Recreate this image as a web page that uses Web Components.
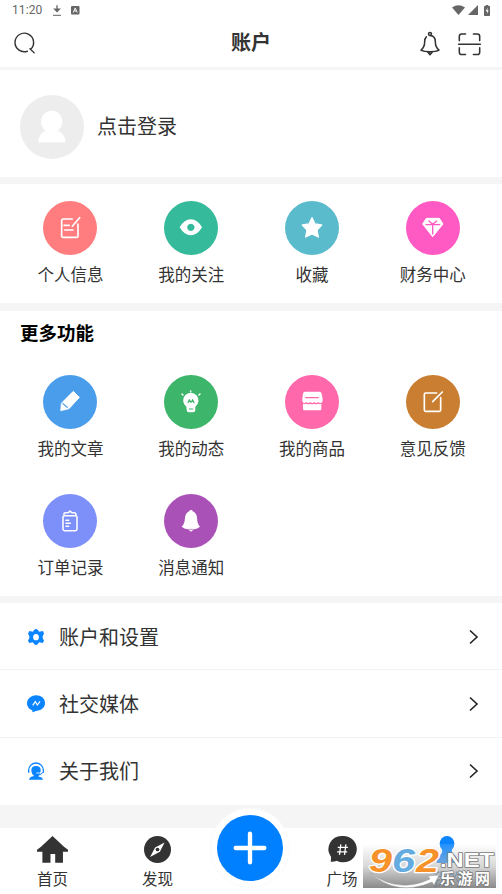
<!DOCTYPE html>
<html lang="zh">
<head>
<meta charset="utf-8">
<title>账户</title>
<style>
html,body{margin:0;height:100%;background:#fff}
body{font-family:"Noto Sans CJK SC",sans-serif;color:#333;overflow:hidden}
</style>
</head>
<body>
<account-page></account-page>
<script>
const ICONS = {
  download:['0 0 24 32','<path d="M12 1v16M5 12l7 7 7-7z" stroke="#666" stroke-width="4" fill="#666"/><path d="M0 30h24" stroke="#666" stroke-width="3"/>'],
  abox:['0 0 26 26','<rect width="26" height="26" rx="3" fill="#666"/><path d="M7 20l6-14 6 14M9.500 15h7" stroke="#fff" stroke-width="3" fill="none"/>'],
  wifi:['0 0 38 32','<path d="M0 8Q19-7 38 8L19 32z" fill="#666"/>'],
  signal:['0 0 30 30','<path d="M30 0v30H0z" fill="#666"/>'],
  battery:['0 0 18 34','<path d="M5 0h8v3h3q2 0 2 2v27q0 2-2 2H2q-2 0-2-2V5q0-2 2-2h3z" fill="#666"/><path d="M11 8l-6 11h4v8l5-11h-4z" fill="#fff"/>'],
  search:['0 0 66 66','<path d="M41 56A28.500 28.500 0 1 1 51 50M49 48l13 13" fill="none" stroke="#333" stroke-width="4.300" stroke-linecap="round"/>'],
  bell:['0 0 60 74','<g fill="none" stroke="#333" stroke-width="4.600" stroke-linejoin="round" stroke-linecap="round"><circle cx="30" cy="6" r="4.500"/><path d="M19 15Q14 20 14 30Q14 47 3 56Q12 61 30 61T57 56Q46 47 46 30Q46 12 30 11M23 62l7 8 7-8z"/></g>'],
  scan:['0 0 70 68','<path d="M4 23V10q0-7 7-7h12M47 3h12q7 0 7 7v13M4 45v13q0 7 7 7h12M47 65h12q7 0 7-7V45M2 34h66" fill="none" stroke="#333" stroke-width="4.700" stroke-linecap="round"/>'],
  person:['0 0 192 192','<ellipse cx="95" cy="80" rx="32" ry="33" fill="#fff"/><path d="M54 142Q57 111 80 107L94 112 110 107Q134 111 137 142z" fill="#fff"/>'],
  info:['0 0 162 162','<path d="M88 54H61q-5 0-5 5v45q0 5 5 5h39q5 0 5-5V69M110 50L88 76M63 73h16M65 87h25" fill="none" stroke="#fff" stroke-width="5" stroke-linecap="round"/>'],
  eye:['0 0 162 162','<path fill="#fff" fill-rule="evenodd" d="M47 79Q61 55 80.500 55T114 79Q100 103 80.500 103T47 79zM80.500 68a11 11 0 1 0 .1 0z"/>'],
  star:['0 0 162 162','<path d="M81 50l9 19 20 3-14 15 4 21-19-9-19 9 4-21-14-15 20-3z" fill="#fff" stroke="#fff" stroke-width="4" stroke-linejoin="round"/>'],
  gem:['0 0 162 162','<path d="M61 52h39l11 17-31 38-30-38z" fill="#fff" stroke="#fff" stroke-width="3" stroke-linejoin="round"/><path d="M69 60l11 10 12-10M60 71h41M80 70v29" fill="none" stroke="#ff5ac4" stroke-width="4" stroke-linecap="round"/>'],
  pencil:['0 0 162 162','<path d="M91 49l18 18-31 34-20-19z" fill="#fff" stroke="#fff" stroke-width="3" stroke-linejoin="round"/><path d="M55 84l21 18-23 5z" fill="#fff" stroke="#fff" stroke-width="2"/><path d="M60 86l14 12" stroke="#4a9deb" stroke-width="3.500"/>'],
  bulb:['0 0 162 162','<path d="M67 95A23 23 0 1 1 94 95V105q0 7-7 7H75q-7 0-7-7z" fill="#fff"/><path d="M72 83l4-8 5 7 5-7 4 8M76 102h10" fill="none" stroke="#3db56a" stroke-width="3.600" stroke-linecap="round"/><path d="M80 48v2M54 57l3 3M108 57l-3 3" stroke="#fff" stroke-width="4.500" stroke-linecap="round"/>'],
  shop:['0 0 162 162','<path d="M60 50h43q6 0 7 6l3 17q1 9-5 11-5 1-8-3-6 6-12 0-6 6-12 0-6 6-12 0-4 4-9 2-5-3-3-11l2-16q1-6 6-6z" fill="#fff"/><path d="M54 86q6 2 11 0 6 3 11 0 6 3 12 0 6 3 11 0 5 2 10 0v16q0 4-4 4H58q-4 0-4-4z" fill="#fff"/><path d="M62 68h38" stroke="#ff68ab" stroke-width="3.500" stroke-linecap="round"/>'],
  edit:['0 0 162 162','<path d="M92 54H59q-4 0-4 4v47q0 4 4 4h41q4 0 4-4V68M109 51L80 80" fill="none" stroke="#fff" stroke-width="5" stroke-linecap="round"/>'],
  order:['0 0 162 162','<path d="M60 69q0-4 4-4h33q5 0 5 4v36q0 5-5 5H65q-5 0-5-5zM63 62q-1-6 6-6h7l5-5 5 5h7q6 0 6 6M69 79h8M69 88h13M69 97h8" fill="none" stroke="#fff" stroke-width="4.600" stroke-linecap="round" stroke-linejoin="round"/>'],
  notice:['0 0 162 162','<path d="M76 52q0-4 5-4t5 4q12 5 13 19 1 20 9 27-7 6-18 8l-9 7-9-7q-13-2-19-8 9-8 10-27 1-14 13-19z" fill="#fff"/><path d="M73 106h15" stroke="#aa51b8" stroke-width="2"/>'],
  gear:['0 0 54 54','<path d="M21 6l6-4 6 4 3 5 12-2 3 8-4 8v5l4 8-4 7-11-2-4 6-5 3-6-4-3-5-11 2-4-7 4-8v-5l-4-8 4-8 11 2z" fill="#0a84ff"/><ellipse cx="27" cy="27.500" rx="8.500" ry="9.500" fill="#fff"/>'],
  chat:['0 0 54 54','<path d="M27 1C42 1 54 10 54 24S42 47 30 47L16 52V46C6 43 0 34 0 24S12 1 27 1z" fill="#0a84ff"/><path d="M17 31l8-11 6 10 8-11" fill="none" stroke="#fff" stroke-width="3.500"/>'],
  support:['0 0 54 54','<path d="M5 32V25A22 22 0 0 1 49 25V32" fill="none" stroke="#0a84ff" stroke-width="4"/><path d="M13 27Q12 12 27 12T41 26Q42 36 35 41V44Q46 44 48 53H6Q8 44 20 43V40Q14 36 13 27z" fill="#0a84ff"/><path d="M28 33q12 3 18-5" stroke="#fff" stroke-width="2.500" fill="none"/><path d="M48 31l-8 7H27" stroke="#0a84ff" stroke-width="3" fill="none"/>'],
  arrow:['0 0 12 18','<path d="M2 2.500l7 6.500-7 6.500" fill="none" stroke="#222" stroke-width="1.600"/>'],
  home:['0 0 92 80','<path d="M46 0l16 15 18 17 12 9v6H77V79H54V53H40V79H16V47H0V41L12 32z" fill="#333"/>'],
  compass:['0 0 80 80','<circle cx="40" cy="40" r="40" fill="#333"/><path d="M61 19L47 47 18 62 33 34z" fill="#fff"/><circle cx="40" cy="40" r="5.500" fill="#333"/>'],
  square:['0 0 80 80','<path d="M40 0a40 39 0 1 1-17 73Q15 77 5 76 6 70 6 62A39 39 0 0 1 40 0z" fill="#333"/><path d="M35 25l-4 31M50 25l-4 31M26 34h30M24 47h30" stroke="#fff" stroke-width="3.800"/>'],
  plus:['0 0 96 96','<path d="M48 5v86M5 48h86" stroke="#fff" stroke-width="13" stroke-linecap="round"/>'],
  me:['0 0 66 76','<circle cx="33" cy="22" r="22" fill="#0a84ff"/><path d="M18 38h30q-3 12 9 16 7 5 7 22H2Q2 60 10 54 21 50 18 38z" fill="#0a84ff"/>']
};

class UiIcon extends HTMLElement{
  connectedCallback(){
    const [box,body]=ICONS[this.getAttribute('name')];
    const w=this.getAttribute('w'),h=this.getAttribute('h')||w;
    this.attachShadow({mode:'open'}).innerHTML=`<style>:host{display:block;flex:none;width:${w}px;height:${h}px}svg{display:block;width:100%;height:100%;overflow:visible}</style><svg viewBox="${box}" preserveAspectRatio="none">${body}</svg>`;
  }
}
customElements.define('ui-icon',UiIcon);

const define=(tag,render)=>customElements.define(tag,class extends HTMLElement{
  connectedCallback(){ this.attachShadow({mode:'open'}).innerHTML=render(this); }
});

define('status-bar',()=>`<style>
:host{display:flex;height:20px;box-sizing:border-box;padding:0 12px;align-items:center;font:12px/20px Roboto,sans-serif;color:#666}
.time{letter-spacing:.1px;width:30px;white-space:nowrap}
.dl{margin-left:11px}.ab{margin-left:10px}.sp{flex:1}.sg{margin:0 6px 0 3px}
</style><span class="time">11:20</span><ui-icon class="dl" name="download" w="8" h="11"></ui-icon><ui-icon class="ab" name="abox" w="8.500"></ui-icon><span class="sp"></span><ui-icon name="wifi" w="13" h="10"></ui-icon><ui-icon class="sg" name="signal" w="10"></ui-icon><ui-icon name="battery" w="6" h="11"></ui-icon>`);

define('nav-header',()=>`<style>
:host{display:grid;grid-template-columns:1fr auto 1fr;align-items:center;height:47px;box-sizing:border-box;padding:0 21px 0 13.500px}
h1{margin:0;padding:0 0 4px;font-size:20px;line-height:24px;font-weight:700}
.r{display:flex;justify-content:flex-end;gap:18.500px;align-items:center;padding-top:1px}
ui-icon[name=search]{margin-top:1px}
:host{grid-template-columns:217.500px auto 1fr}
</style><ui-icon name="search" w="21.500"></ui-icon><h1><slot></slot></h1><div class="r"><ui-icon name="bell" w="20" h="24"></ui-icon><ui-icon name="scan" w="23" h="22.500"></ui-icon></div>`);

define('login-card',()=>`<style>
:host{display:flex;align-items:center;gap:13px;padding:8px 20px 1px;height:107px;box-sizing:border-box}
.a{width:64px;height:64px;border-radius:50%;background:#ededed}
span{font-size:20px;line-height:28px;padding-bottom:3px}
</style><div class="a"><ui-icon name="person" w="64"></ui-icon></div><span><slot></slot></span>`);

define('action-tile',el=>`<style>
:host{display:flex;flex-direction:column;align-items:center}
.c{width:54px;height:54px;border-radius:50%;background:${el.getAttribute('color')}}
span{font-size:16.500px;line-height:24px;margin-top:7px;white-space:nowrap}
</style><div class="c"><ui-icon name="${el.getAttribute('icon')}" w="54"></ui-icon></div><span><slot></slot></span>`);

define('tile-grid',()=>`<style>
:host{display:grid;grid-template-columns:repeat(4,1fr);row-gap:34px;padding:0 9px 0 10px}
</style><slot></slot>`);

define('page-section',el=>`<style>
:host{display:block;box-sizing:border-box;background:#fff}
h2{box-sizing:border-box;margin:0;padding:9px 20px 0;font-size:18.500px;line-height:24px;height:64px;font-weight:700;color:#000}
</style>${el.getAttribute('heading')?`<h2>${el.getAttribute('heading')}</h2>`:''}<slot></slot>`);

define('menu-row',el=>`<style>
:host{display:flex;align-items:center;height:67.300px;box-sizing:border-box;padding:1px 22px 0 27px;border-bottom:1px solid #f3f3f3}
:host(:last-child){border-color:transparent;padding-top:0}
span{flex:1;margin-left:14px;font-size:20px;line-height:28px}
</style><ui-icon name="${el.getAttribute('icon')}" w="18"></ui-icon><span><slot></slot></span><ui-icon name="arrow" w="12" h="18"></ui-icon>`);

define('tab-item',el=>`<style>
:host{display:flex;flex-direction:column;align-items:center;padding-top:8px}
span{font-size:15.500px;line-height:22px;margin-top:4px;color:var(--tab,#333)}
.i{height:27px}
</style><div class="i"><ui-icon name="${el.getAttribute('icon')}" w="${el.getAttribute('w')}" h="27"></ui-icon></div><span><slot></slot></span>`);

define('add-button',()=>`<style>
:host{position:absolute;left:210px;top:-20px;width:80px;height:80px;border-radius:50%;background:#fff;display:grid;place-items:center;box-shadow:inset 0 0 0 1px #fafafa}
div{width:66px;height:66px;border-radius:50%;background:#0080ff;display:grid;place-items:center}
</style><div><ui-icon name="plus" w="32"></ui-icon></div>`);

define('site-stamp',()=>`<style>
:host{position:absolute;left:363px;bottom:0;width:133px;height:44px;background:linear-gradient(rgba(255,255,255,.1),rgba(190,190,190,.6) 50%,rgba(125,125,125,.9))}
svg{display:block;overflow:visible}text{paint-order:stroke;stroke-linejoin:round}
</style><svg width="133" height="44" viewBox="0 0 133 44">
<path d="M7 29Q36 50 67 35l-2-3 11-1-5 10-2-3Q34 53 7 29z" fill="#fff" stroke="#999" stroke-width=".5"/>
<g font-family="Liberation Sans,sans-serif" font-weight="700" font-style="italic" font-size="34" stroke="#fff" stroke-width="2.500">
<text x="6" y="28" textLength="23" lengthAdjust="spacingAndGlyphs" fill="#f7922b">9</text><text x="29" y="28" textLength="23" lengthAdjust="spacingAndGlyphs" fill="#64ace0">6</text><text x="53" y="28" textLength="23" lengthAdjust="spacingAndGlyphs" fill="#f7922b">2</text></g>
<text x="77" y="22.500" font-family="Liberation Sans,sans-serif" font-weight="700" font-size="19.500" textLength="54" lengthAdjust="spacingAndGlyphs" fill="#fff" stroke="#777" stroke-width="1.500">.NET</text>
<text x="77" y="39.500" font-family="Noto Sans CJK SC,sans-serif" font-weight="700" font-size="15" textLength="50" fill="#fff" stroke="#777" stroke-width="1.500">乐游网</text></svg>`);

define('tab-bar',()=>`<style>
:host{position:relative;display:grid;grid-template-columns:105px 105px 79.500px 105px 105px;height:60.500px;background:#fff}
.me{--tab:#1674c8}
</style><tab-item icon="home" w="31">首页</tab-item><tab-item icon="compass" w="27">发现</tab-item><i></i><tab-item icon="square" w="27">广场</tab-item><tab-item class="me" icon="me" w="22">我的</tab-item><add-button></add-button><site-stamp></site-stamp>`);

define('account-page',()=>`<style>
:host{display:flex;flex-direction:column;width:502px;height:888px;background:#f5f5f5}
.top{background:#fff}
.login{margin-top:3px;height:107px}
.quick{margin-top:7px;height:119px;padding-top:17px}
.more{margin-top:8px;height:285px}
.menu{margin-top:7px;height:202px}
tab-bar{margin-top:auto}
</style>
<div class="top"><status-bar></status-bar><nav-header>账户</nav-header></div>
<page-section class="login"><login-card>点击登录</login-card></page-section>
<page-section class="quick"><tile-grid>
<action-tile icon="info" color="#ff7d7e">个人信息</action-tile><action-tile icon="eye" color="#35ba9b">我的关注</action-tile><action-tile icon="star" color="#59bbcc">收藏</action-tile><action-tile icon="gem" color="#ff5ac4">财务中心</action-tile></tile-grid></page-section>
<page-section class="more" heading="更多功能"><tile-grid>
<action-tile icon="pencil" color="#4a9deb">我的文章</action-tile><action-tile icon="bulb" color="#3db56a">我的动态</action-tile><action-tile icon="shop" color="#ff68ab">我的商品</action-tile><action-tile icon="edit" color="#c97e31">意见反馈</action-tile><action-tile icon="order" color="#7d8ff9">订单记录</action-tile><action-tile icon="notice" color="#aa51b8">消息通知</action-tile></tile-grid></page-section>
<page-section class="menu"><menu-row icon="gear">账户和设置</menu-row><menu-row icon="chat">社交媒体</menu-row><menu-row icon="support">关于我们</menu-row></page-section>
<tab-bar></tab-bar>`);
</script>
</body>
</html>
